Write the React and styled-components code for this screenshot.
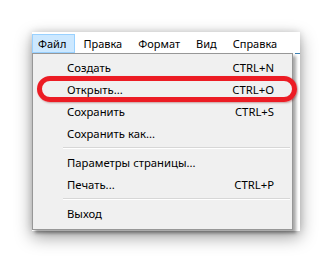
import React from "react";
import styled, { createGlobalStyle } from "styled-components";

const Global = createGlobalStyle`
  html, body { margin: 0; padding: 0; background: #ffffff; }
  body { font-family: "Noto Sans", "Open Sans", sans-serif; }
`;

const Stage = styled.div`
  position: relative;
  width: 332px;
  height: 263px;
  padding: 32px 0 0 32px;
  box-sizing: border-box;
  overflow: hidden;
  background: #fff;
`;

const Window = styled.div`
  width: 268px;
  height: 199px;
  background: #ffffff;
  box-shadow: 0 6px 16px rgba(0, 0, 0, 0.38), 0 0 7px rgba(0, 0, 0, 0.14);
  display: flex;
  flex-direction: column;
`;

const MenuBar = styled.div`
  height: 21px;
  display: flex;
  align-items: flex-end;
  background: #ffffff;
`;

const MenuTitle = styled.div`
  height: 19px;
  box-sizing: border-box;
  display: flex;
  align-items: center;
  padding: 0 ${(p) => p.$pr ?? 7}px 0 ${(p) => p.$pl ?? 7}px;
  font-size: 11px;
  color: #000;
  border: 1px solid ${(p) => (p.$active ? "#99d1ff" : "transparent")};
  background: ${(p) => (p.$active ? "#cce8ff" : "transparent")};
`;

const Body = styled.div`
  flex: 1;
  display: flex;
`;

const Filler = styled.div`
  flex: 1;
  display: flex;
  justify-content: flex-end;
`;

const EditEdge = styled.div`
  width: 5px;
  height: 1px;
  background: #3c7fb1;
`;

const Dropdown = styled.div`
  width: 261px;
  height: 177px;
  box-sizing: border-box;
  background: #f0f0f0;
  border: 1px solid #979797;
  box-shadow: 3px 3px 3px rgba(0, 0, 0, 0.35);
  padding: 2px 2px;
  display: flex;
  flex-direction: column;
`;

const Item = styled.div`
  height: 22px;
  display: flex;
  align-items: center;
  justify-content: space-between;
  padding: 0 16px 0 32px;
  font-size: 11.3px;
  color: #000;
  white-space: nowrap;
`;

const Shortcut = styled.span`
  text-align: right;
`;

const Separator = styled.div`
  height: 7px;
  display: flex;
  align-items: center;
  padding-left: 28px;
  &::after {
    content: "";
    flex: 1;
    height: 1px;
    background: #d7d7d7;
    border-bottom: 1px solid #ffffff;
  }
`;

const Annotation = styled.div`
  position: absolute;
  left: 37px;
  top: 76px;
  width: 260px;
  height: 26px;
  box-sizing: border-box;
  border: 5px solid #ec1c24;
  border-radius: 14px;
  box-shadow: 1px 1px 2px rgba(120, 0, 0, 0.35);
  pointer-events: none;
`;

const menus = ["Файл", "Правка", "Формат", "Вид", "Справка"];

const items = [
  { label: "Создать", key: "CTRL+N" },
  { label: "Открыть...", key: "CTRL+O" },
  { label: "Сохранить", key: "CTRL+S" },
  { label: "Сохранить как..." },
  { sep: true },
  { label: "Параметры страницы..." },
  { label: "Печать...", key: "CTRL+P" },
  { sep: true },
  { label: "Выход" },
];

export default function App() {
  return (
    <>
      <Global />
      <Stage>
        <Window>
          <MenuBar>
            {menus.map((m, i) => (
              <MenuTitle key={m} $active={i === 0} $pl={i === 0 ? 5 : 7} $pr={i === 0 ? 8 : 7}>
                {m}
              </MenuTitle>
            ))}
          </MenuBar>
          <Body>
            <Dropdown>
              {items.map((it, i) =>
                it.sep ? (
                  <Separator key={i} />
                ) : (
                  <Item key={i}>
                    <span>{it.label}</span>
                    {it.key && <Shortcut>{it.key}</Shortcut>}
                  </Item>
                )
              )}
            </Dropdown>
            <Filler>
              <EditEdge />
            </Filler>
          </Body>
        </Window>
        <Annotation />
      </Stage>
    </>
  );
}
